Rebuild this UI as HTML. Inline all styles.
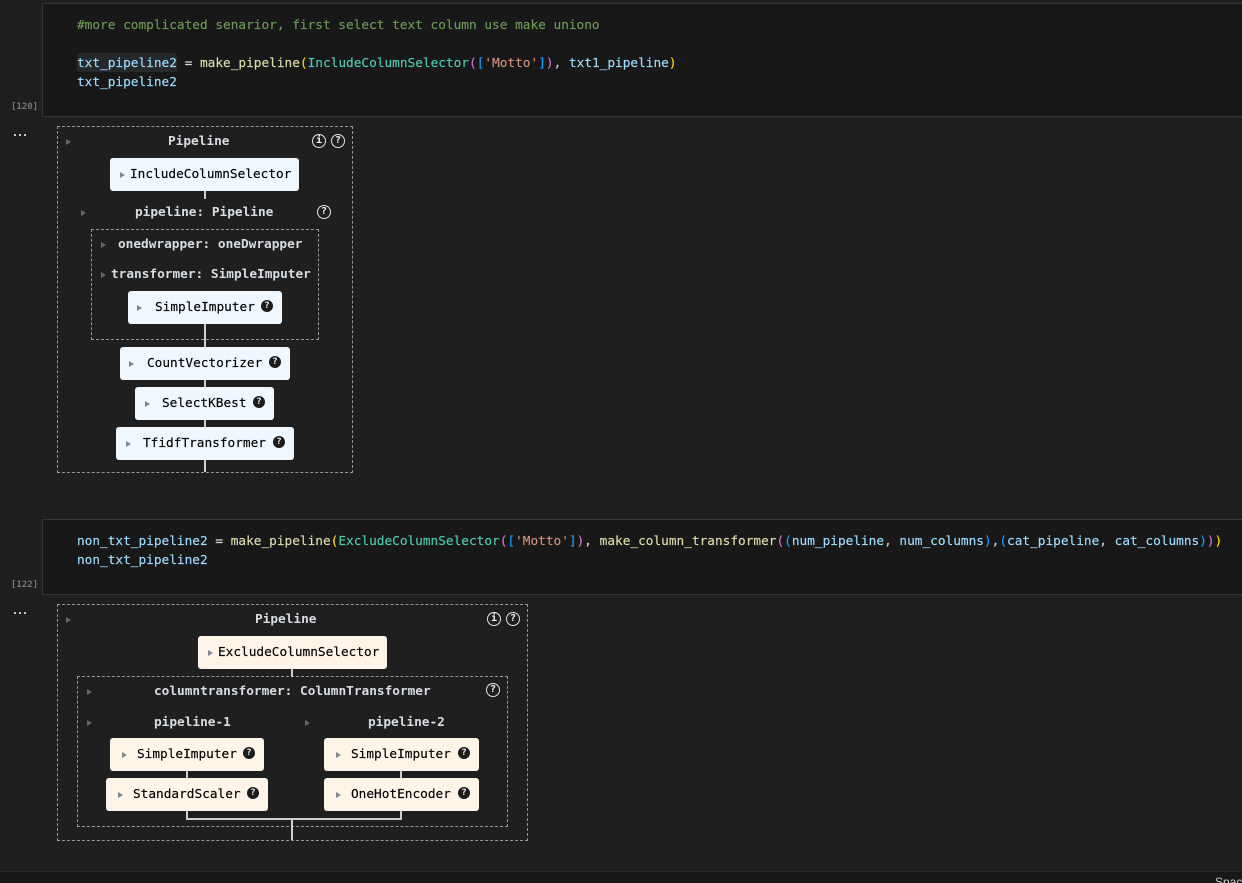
<!DOCTYPE html>
<html><head><meta charset="utf-8">
<style>
html,body{margin:0;padding:0;width:1242px;height:883px;overflow:hidden;background:#1f1f1f}
body{position:relative;font-family:"DejaVu Sans Mono","Liberation Mono",monospace;font-size:12.78px;letter-spacing:0}
div,span.a{position:absolute}
.cell{left:42px;right:-2px;background:#181818;border:1px solid #333538;box-sizing:border-box}
.c{white-space:pre;line-height:19px;height:19px;left:77px;color:#9cdcfe;margin-top:1px;-webkit-text-stroke:.15px}
.f{color:#dcdcaa}.k{color:#4ec9b0}.s{color:#ce9178}.g{color:#ffd700}.p{color:#da70d6}.b{color:#179fff}.o{color:#d4d4d4}
.n{color:#777;font-size:9px;font-weight:bold;line-height:12px;left:11px;letter-spacing:0;margin-top:1px}
.d{left:14px;width:14px;height:2px;background-image:linear-gradient(90deg,#ccc 2px,transparent 2px);background-size:5px 2px}
.dash{border:1px dashed #969696;box-sizing:border-box}
.box{border-radius:3px;box-sizing:border-box}
.bl{background:#f0f8ff}.or{background:#fef4e8}
.l{background:#cfcfcf}
.t{white-space:pre;line-height:20px;height:20px;color:#000;margin-top:1px;-webkit-text-stroke:.15px}
.h{white-space:pre;line-height:20px;height:20px;color:#d8dde2;font-weight:bold;margin-top:1px}
.ar{width:0;height:0;border-left:5px solid #666;border-top:3px solid transparent;border-bottom:3px solid transparent}
.ab{border-left-color:#7d8794}
.ic{width:14px;height:14px;border:1.5px solid #dfe6ec;border-radius:50%;box-sizing:border-box;color:#eef3f7;font:bold 10px/11px "DejaVu Sans Mono",monospace;letter-spacing:0;text-align:center}
.id{width:12px;height:12px;background:#1c1c1c;border-radius:50%;color:#f0f0f0;font:bold 9px/12px "DejaVu Sans Mono",monospace;letter-spacing:0;text-align:center}
</style></head><body>

<div class="cell" style="top:3px;height:114px"></div>
<div style="left:77px;top:53px;width:100px;height:19px;background:#26292c;border-radius:3px"></div>
<div class="c" style="top:15px;color:#6a9955">#more complicated senarior, first select text column use make uniono</div>
<div class="c" style="top:53px">txt_pipeline2 <span class="o">=</span> <span class="f">make_pipeline</span><span class="g">(</span><span class="k">IncludeColumnSelector</span><span class="p">(</span><span class="b">[</span><span class="s">'Motto'</span><span class="b">]</span><span class="p">)</span><span class="o">,</span> txt1_pipeline<span class="g">)</span></div>
<div class="c" style="top:72px">txt_pipeline2</div>
<div class="n" style="top:100px">[120]</div>
<div class="d" style="top:134px"></div>

<!-- diagram 1 -->
<div class="dash" style="left:57px;top:126px;width:296px;height:347px"></div>
<div class="dash" style="left:91px;top:229px;width:228px;height:111px"></div>
<div class="l" style="left:204px;top:190px;width:2px;height:9px"></div>
<div class="l" style="left:204px;top:323px;width:2px;height:25px"></div>
<div class="l" style="left:204px;top:379px;width:2px;height:9px"></div>
<div class="l" style="left:204px;top:419px;width:2px;height:9px"></div>
<div class="l" style="left:204px;top:459px;width:2px;height:13px"></div>

<div class="ar" style="left:66px;top:139px"></div>
<div class="h" style="left:168px;top:131px">Pipeline</div>
<div class="ic" style="left:312px;top:134px">i</div>
<div class="ic" style="left:331px;top:134px">?</div>

<div class="box bl" style="left:110px;top:158px;width:189px;height:33px"></div>
<div class="ar ab" style="left:120px;top:172px"></div>
<div class="t" style="left:130px;top:164px">IncludeColumnSelector</div>

<div class="ar" style="left:81px;top:210px"></div>
<div class="h" style="left:135px;top:202px">pipeline: Pipeline</div>
<div class="ic" style="left:317px;top:205px">?</div>

<div class="ar" style="left:101px;top:242px"></div>
<div class="h" style="left:118px;top:234px">onedwrapper: oneDwrapper</div>
<div class="ar" style="left:101px;top:272px"></div>
<div class="h" style="left:111px;top:264px">transformer: SimpleImputer</div>

<div class="box bl" style="left:128px;top:291px;width:154px;height:33px"></div>
<div class="ar ab" style="left:137px;top:305px"></div>
<div class="t" style="left:155px;top:297px">SimpleImputer</div>
<div class="id" style="left:261px;top:300px">?</div>

<div class="box bl" style="left:120px;top:347px;width:170px;height:33px"></div>
<div class="ar ab" style="left:129px;top:361px"></div>
<div class="t" style="left:147px;top:353px">CountVectorizer</div>
<div class="id" style="left:269px;top:356px">?</div>

<div class="box bl" style="left:135px;top:387px;width:139px;height:33px"></div>
<div class="ar ab" style="left:145px;top:401px"></div>
<div class="t" style="left:162px;top:393px">SelectKBest</div>
<div class="id" style="left:253px;top:396px">?</div>

<div class="box bl" style="left:116px;top:427px;width:178px;height:33px"></div>
<div class="ar ab" style="left:126px;top:441px"></div>
<div class="t" style="left:143px;top:433px">TfidfTransformer</div>
<div class="id" style="left:273px;top:436px">?</div>

<div class="cell" style="top:519px;height:76px"></div>
<div class="c" style="top:531px">non_txt_pipeline2 <span class="o">=</span> <span class="f">make_pipeline</span><span class="g">(</span><span class="k">ExcludeColumnSelector</span><span class="p">(</span><span class="b">[</span><span class="s">'Motto'</span><span class="b">]</span><span class="p">)</span><span class="o">,</span> <span class="f">make_column_transformer</span><span class="p">(</span><span class="b">(</span>num_pipeline<span class="o">,</span> num_columns<span class="b">)</span><span class="o">,</span><span class="b">(</span>cat_pipeline<span class="o">,</span> cat_columns<span class="b">)</span><span class="p">)</span><span class="g">)</span></div>
<div class="c" style="top:550px">non_txt_pipeline2</div>
<div class="n" style="top:578px">[122]</div>
<div class="d" style="top:612px"></div>

<!-- diagram 2 -->
<div class="dash" style="left:57px;top:604px;width:471px;height:237px"></div>
<div class="dash" style="left:77px;top:676px;width:431px;height:151px"></div>
<div class="l" style="left:291px;top:668px;width:2px;height:9px"></div>
<div class="l" style="left:186px;top:770px;width:2px;height:9px"></div>
<div class="l" style="left:400px;top:770px;width:2px;height:9px"></div>
<div class="l" style="left:186px;top:810px;width:2px;height:10px"></div>
<div class="l" style="left:400px;top:810px;width:2px;height:10px"></div>
<div class="l" style="left:186px;top:818px;width:216px;height:2px"></div>
<div class="l" style="left:291px;top:819px;width:2px;height:21px"></div>

<div class="ar" style="left:66px;top:617px"></div>
<div class="h" style="left:255px;top:609px">Pipeline</div>
<div class="ic" style="left:487px;top:612px">i</div>
<div class="ic" style="left:506px;top:612px">?</div>

<div class="box or" style="left:198px;top:636px;width:189px;height:33px"></div>
<div class="ar ab" style="left:208px;top:650px"></div>
<div class="t" style="left:218px;top:642px">ExcludeColumnSelector</div>

<div class="ar" style="left:87px;top:689px"></div>
<div class="h" style="left:154px;top:681px">columntransformer: ColumnTransformer</div>
<div class="ic" style="left:486px;top:683px">?</div>

<div class="ar" style="left:87px;top:720px"></div>
<div class="h" style="left:154px;top:712px">pipeline-1</div>
<div class="ar" style="left:305px;top:720px"></div>
<div class="h" style="left:368px;top:712px">pipeline-2</div>

<div class="box or" style="left:110px;top:738px;width:154px;height:33px"></div>
<div class="ar ab" style="left:122px;top:752px"></div>
<div class="t" style="left:137px;top:744px">SimpleImputer</div>
<div class="id" style="left:243px;top:747px">?</div>

<div class="box or" style="left:106px;top:778px;width:162px;height:33px"></div>
<div class="ar ab" style="left:118px;top:792px"></div>
<div class="t" style="left:133px;top:784px">StandardScaler</div>
<div class="id" style="left:247px;top:787px">?</div>

<div class="box or" style="left:324px;top:738px;width:155px;height:33px"></div>
<div class="ar ab" style="left:336px;top:752px"></div>
<div class="t" style="left:351px;top:744px">SimpleImputer</div>
<div class="id" style="left:458px;top:747px">?</div>

<div class="box or" style="left:324px;top:778px;width:155px;height:33px"></div>
<div class="ar ab" style="left:336px;top:792px"></div>
<div class="t" style="left:351px;top:784px">OneHotEncoder</div>
<div class="id" style="left:458px;top:787px">?</div>

<!-- status bar -->
<div style="left:0;top:871px;width:1242px;height:12px;background:#181818;border-top:1px solid #2b2b2b;box-sizing:border-box;overflow:hidden">
<div style="left:1215px;top:3px;color:#cccccc;font:12px/14px 'Liberation Sans',sans-serif;letter-spacing:0;white-space:pre">Spaces: 4</div>
</div>
</body></html>
